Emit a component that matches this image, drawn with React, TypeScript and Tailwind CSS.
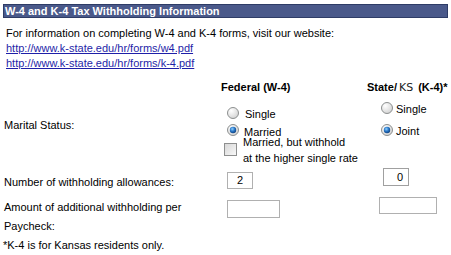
import React from 'react'

function Radio({ checked }: { checked?: boolean }) {
  return (
    <svg width="12" height="12" viewBox="0 0 12 12" className="shrink-0">
      <defs>
        <radialGradient id="rbg" cx="0.35" cy="0.3" r="0.8">
          <stop offset="0" stopColor="#ffffff" />
          <stop offset="1" stopColor="#d0d0d0" />
        </radialGradient>
        <radialGradient id="rdot" cx="0.4" cy="0.35" r="0.7">
          <stop offset="0" stopColor="#8fd0ff" />
          <stop offset="0.5" stopColor="#2a78c8" />
          <stop offset="1" stopColor="#0b3c7a" />
        </radialGradient>
      </defs>
      <circle cx="6" cy="6" r="5.5" fill="url(#rbg)" stroke="#8c8f8f" strokeWidth="1" />
      {checked && <circle cx="6" cy="6" r="3.2" fill="url(#rdot)" />}
    </svg>
  )
}

function Checkbox() {
  return (
    <span className="block w-[13px] h-[13px] border border-[#8e8f8f] bg-gradient-to-br from-[#d8d8d8] to-[#f8f8f8]" />
  )
}

export default function App() {
  return (
    <div className="w-[451px] h-[255px] bg-white text-black text-[11px] leading-[14px] font-['Liberation_Sans',Arial,sans-serif] overflow-hidden">
      <div className="mx-[3px] mt-[4px] h-[14px] bg-[#4a598a] border border-[#2e3c66] text-white font-bold text-[11px] leading-[12px] pl-[1px]">
        W-4 and K-4 Tax Withholding Information
      </div>

      <div className="pl-[6px] mt-[8px] leading-[15px]">
        <p>For information on completing W-4 and K-4 forms, visit our website:</p>
        <a href="#" className="block text-[#1f1fa8] underline">http://www.k-state.edu/hr/forms/w4.pdf</a>
        <a href="#" className="block text-[#1f1fa8] underline">http://www.k-state.edu/hr/forms/k-4.pdf</a>
      </div>

      <div className="grid grid-cols-[216px_147px_88px] pl-[4px] mt-[9px] whitespace-nowrap">
        <div />
        <div className="font-bold pl-[1px]">Federal (W-4)</div>
        <div className="font-bold">
          State/<span className="font-normal font-['DejaVu_Sans',sans-serif] text-[11px] ml-[2px] mr-[5px] text-[#222]">KS</span>(K-4)*
        </div>

        <div className="pt-[23px]">Marital Status:</div>
        <div className="pl-[7px] pt-[12px]">
          <div className="flex items-center gap-[6px] h-[12px]">
            <Radio />
            <span className="mt-[2px]">Single</span>
          </div>
          <div className="flex items-center gap-[5px] h-[12px] mt-[5px]">
            <Radio checked />
            <span className="mt-[3px]">Married</span>
          </div>
          <div className="flex items-start gap-[6px] -ml-[3px] -mt-[2px] leading-[16px]">
            <span className="mt-[9px]"><Checkbox /></span>
            <span>Married, but withhold<br />at the higher single rate</span>
          </div>
        </div>
        <div className="pl-[14px] pt-[7px]">
          <div className="flex items-center gap-[3px] h-[12px]">
            <Radio />
            <span className="mt-[1px]">Single</span>
          </div>
          <div className="flex items-center gap-[3px] h-[12px] mt-[10px]">
            <Radio checked />
            <span className="mt-[1px]">Joint</span>
          </div>
        </div>

        <div className="pt-[9px]">Number of withholding allowances:</div>
        <div className="pl-[7px] pt-[6px]">
          <div className="w-[26px] h-[17px] border border-[#b0b0b0] text-[11px] leading-[15px] text-center">2</div>
        </div>
        <div className="pl-[16px] pt-[2px]">
          <div className="w-[26px] h-[18px] border border-[#a0a0a0] text-[11px] leading-[16px] text-right pr-[5px]">0</div>
        </div>

        <div className="pt-[9px] leading-[19px]">Amount of additional withholding per<br />Paycheck:</div>
        <div className="pl-[7px] pt-[11px]">
          <div className="w-[53px] h-[18px] border border-[#b0b0b0]" />
        </div>
        <div className="pl-[12px] pt-[8px]">
          <div className="w-[58px] h-[17px] border border-[#b0b0b0]" />
        </div>
      </div>

      <div className="pl-[3px] mt-[2px]">*K-4 is for Kansas residents only.</div>
    </div>
  )
}
